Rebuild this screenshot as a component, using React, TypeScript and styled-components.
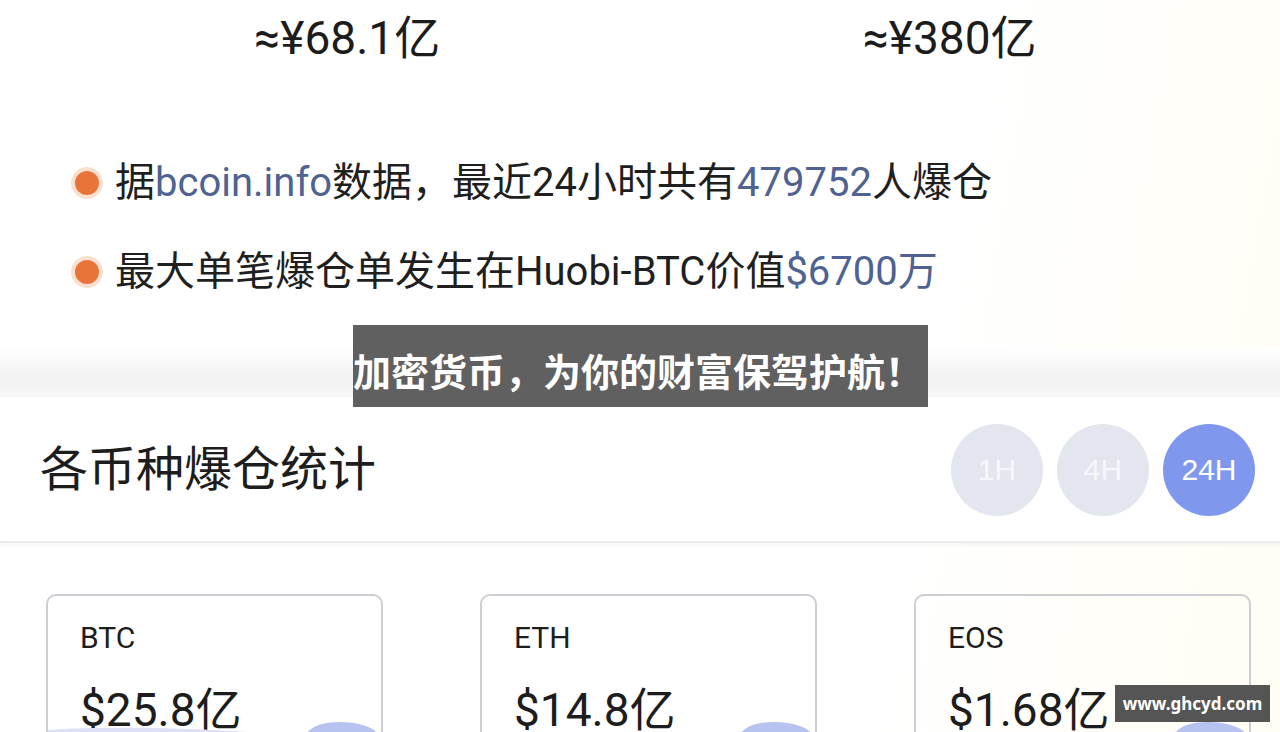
import styled, { createGlobalStyle } from 'styled-components'

const GlobalStyle = createGlobalStyle`
  html, body {
    margin: 0;
    padding: 0;
    background: #ffffff;
    overflow: hidden;
  }
  body {
    font-family: Roboto, "Noto Sans CJK SC", "Noto Sans", sans-serif;
    color: #1f1f1f;
  }
`

const Page = styled.div`
  position: relative;
  width: 1280px;
  height: 732px;
  overflow: hidden;
  display: flex;
  flex-direction: column;
  background: linear-gradient(100deg, #ffffff 70%, #fffdf4 100%);

  & > * {
    flex-shrink: 0;
  }
`

const SummaryRow = styled.div`
  display: grid;
  grid-template-columns: 1fr 1fr;
  padding: 10px 29px 0 46px;
`

const SummaryValue = styled.div`
  font-size: 46px;
  line-height: 56px;
  text-align: center;
  color: #1c1c1c;
`

const BulletList = styled.ul`
  list-style: none;
  margin: 92px 0 0;
  padding: 0 0 0 75px;
  display: flex;
  flex-direction: column;
  gap: 39px;
`

const BulletRow = styled.li`
  display: flex;
  align-items: center;
  gap: 16px;
  font-size: 40px;
  line-height: 50px;
  color: #1f1f1f;
  white-space: nowrap;
`

const Dot = styled.span`
  width: 24px;
  height: 24px;
  border-radius: 50%;
  background: #e8743a;
  box-shadow: 0 0 0 4px rgba(246, 186, 150, 0.45);
  flex: none;
`

const Highlight = styled.span`
  color: #4f6291;
`

const Band = styled.div`
  height: 50px;
  margin-top: 50px;
  background: linear-gradient(to bottom, #ffffff 0%, #f2f2f2 60%, #f7f7f7 100%);
`

const SectionHeader = styled.div`
  height: 146px;
  box-sizing: border-box;
  display: flex;
  align-items: center;
  justify-content: space-between;
  padding: 0 25px 12px 40px;
  border-bottom: 2px solid #ececec;
  box-shadow: 0 3px 5px rgba(0, 0, 0, 0.04);
  background: #ffffff;
`

const SectionTitle = styled.h2`
  margin: 4px 0 0;
  font-size: 48px;
  font-weight: 400;
  line-height: 60px;
  color: #1d1d1d;
  font-family: "Noto Sans CJK SC", sans-serif;
`

const PeriodGroup = styled.div`
  display: flex;
  gap: 14px;
  margin-top: 14px;
`

const PeriodPill = styled.div<{ $active?: boolean }>`
  width: 92px;
  height: 92px;
  border-radius: 50%;
  display: flex;
  align-items: center;
  justify-content: center;
  background: ${p => (p.$active ? '#7f98ee' : '#e4e6ef')};
  color: ${p => (p.$active ? '#ffffff' : '#f7f7fb')};
  font-size: 30px;
  font-family: "Liberation Sans", sans-serif;
`

const CardsRow = styled.div`
  display: grid;
  grid-template-columns: repeat(3, 337px);
  gap: 97px;
  padding: 51px 29px 0 46px;
`

const Card = styled.div`
  height: 220px;
  border: 2px solid #cdced3;
  border-radius: 10px;
  padding: 20px 0 0 32px;
  display: flex;
  flex-direction: column;
  overflow: hidden;
`

const CoinName = styled.div`
  font-size: 30px;
  line-height: 44px;
  color: #1d1d1d;
`

const CoinValue = styled.div`
  margin-top: 22px;
  font-size: 46px;
  line-height: 56px;
  color: #1d1d1d;
`

const Chart = styled.svg`
  display: block;
  margin: -22px 0 0 -32px;
`

const Banner = styled.div`
  position: absolute;
  left: 353px;
  top: 325px;
  width: 575px;
  height: 82px;
  box-sizing: border-box;
  padding-top: 8px;
  background: #606060;
  color: #ffffff;
  font-family: "Noto Sans CJK SC", sans-serif;
  font-weight: 700;
  font-size: 38px;
  line-height: 74px;
  white-space: nowrap;
  overflow: hidden;
`

const Watermark = styled.div`
  position: absolute;
  left: 1115px;
  top: 685px;
  width: 155px;
  height: 37px;
  background: #555555;
  color: #ffffff;
  font-family: "Noto Sans", sans-serif;
  font-weight: 700;
  font-size: 17px;
  line-height: 37px;
  text-align: center;
`

const coins = [
  { name: 'BTC', value: '$25.8亿', band: true },
  { name: 'ETH', value: '$14.8亿', band: false },
  { name: 'EOS', value: '$1.68亿', band: false },
]

function WaveChart({ band }: { band: boolean }) {
  return (
    <Chart width="333" height="40" viewBox="0 0 333 40">
      {band && (
        <path d="M0 14 C60 10 140 12 200 16 C230 18 245 18 258 16 L258 40 L0 40 Z" fill="#dde0f8" />
      )}
      <path d="M250 40 C252 14 268 6 292 6 C316 6 330 14 333 22 L333 40 Z" fill="#b7c2f0" />
    </Chart>
  )
}

export default function App() {
  return (
    <Page>
      <GlobalStyle />
      <SummaryRow>
        <SummaryValue>≈¥68.1亿</SummaryValue>
        <SummaryValue>≈¥380亿</SummaryValue>
      </SummaryRow>

      <BulletList>
        <BulletRow>
          <Dot />
          <span>
            据<Highlight>bcoin.info</Highlight>数据，最近24小时共有<Highlight>479752</Highlight>人爆仓
          </span>
        </BulletRow>
        <BulletRow>
          <Dot />
          <span>
            最大单笔爆仓单发生在Huobi-BTC价值<Highlight>$6700万</Highlight>
          </span>
        </BulletRow>
      </BulletList>

      <Band />

      <SectionHeader>
        <SectionTitle>各币种爆仓统计</SectionTitle>
        <PeriodGroup>
          <PeriodPill>1H</PeriodPill>
          <PeriodPill>4H</PeriodPill>
          <PeriodPill $active>24H</PeriodPill>
        </PeriodGroup>
      </SectionHeader>

      <CardsRow>
        {coins.map(c => (
          <Card key={c.name}>
            <CoinName>{c.name}</CoinName>
            <CoinValue>{c.value}</CoinValue>
            <WaveChart band={c.band} />
          </Card>
        ))}
      </CardsRow>

      <Banner>加密货币，为你的财富保驾护航！</Banner>
      <Watermark>www.ghcyd.com</Watermark>
    </Page>
  )
}
